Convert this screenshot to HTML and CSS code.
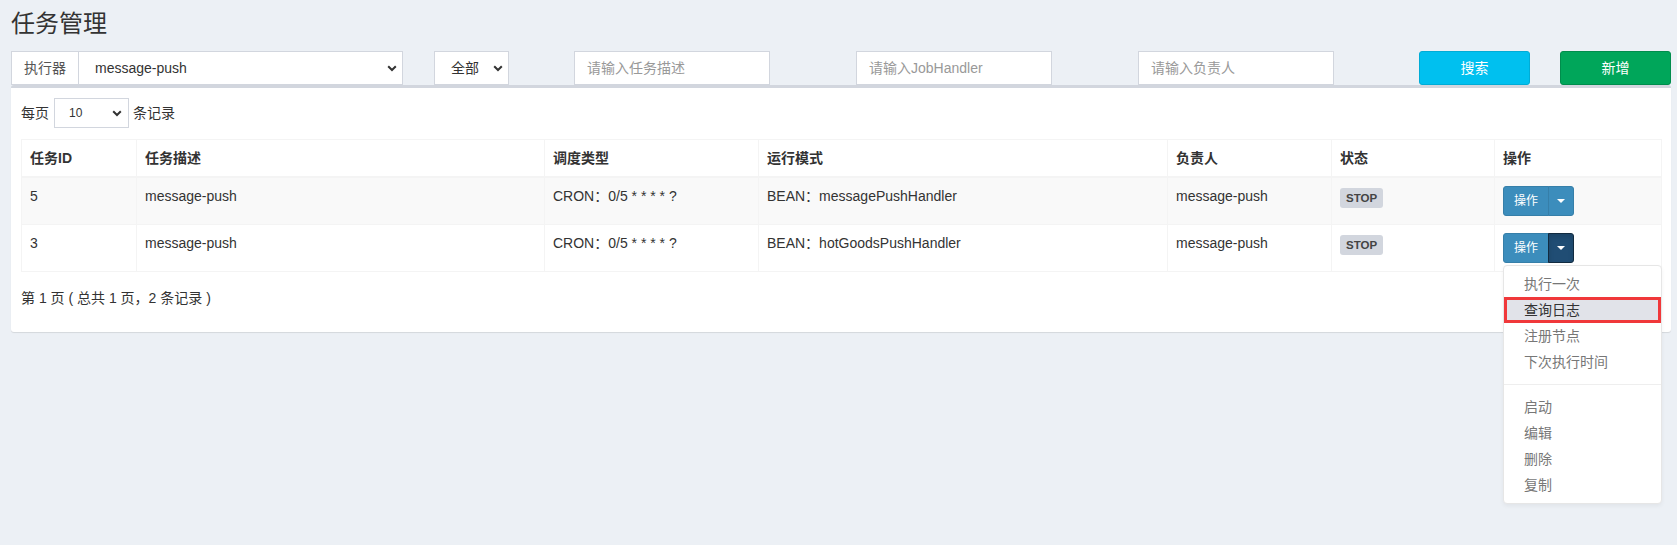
FILE: index.html
```html
<!DOCTYPE html>
<html lang="zh-CN">
<head>
<meta charset="utf-8">
<title>任务管理</title>
<link rel="stylesheet" href="styles.css">
</head>
<body>
<div class="page">
  <h1 class="title">任务管理</h1>

  <div class="filters">
    <div class="group executor">
      <span class="addon">执行器</span>
      <div class="select grow"><span>message-push</span><svg class="chev" width="10" height="7" viewBox="0 0 10 7"><path d="M1.2 1.2 L5 5 L8.8 1.2" fill="none" stroke="#333" stroke-width="2"/></svg></div>
    </div>
    <div class="select status"><span>全部</span><svg class="chev" width="10" height="7" viewBox="0 0 10 7"><path d="M1.2 1.2 L5 5 L8.8 1.2" fill="none" stroke="#333" stroke-width="2"/></svg></div>
    <div class="input f-desc"><span class="ph">请输入任务描述</span></div>
    <div class="input f-handler"><span class="ph">请输入JobHandler</span></div>
    <div class="input f-author"><span class="ph">请输入负责人</span></div>
    <div class="btn btn-info f-search">搜索</div>
    <div class="btn btn-success f-add">新增</div>
  </div>

  <div class="box">
    <div class="box-body">
      <div class="length">
        <span>每页</span>
        <div class="select len"><span>10</span><svg class="chev" width="10" height="7" viewBox="0 0 10 7"><path d="M1.2 1.2 L5 5 L8.8 1.2" fill="none" stroke="#333" stroke-width="2"/></svg></div>
        <span>条记录</span>
      </div>

      <table class="grid">
        <colgroup>
          <col class="c1"><col class="c2"><col class="c3"><col class="c4"><col class="c5"><col class="c6"><col class="c7">
        </colgroup>
        <thead>
          <tr><th>任务ID</th><th>任务描述</th><th>调度类型</th><th>运行模式</th><th>负责人</th><th>状态</th><th>操作</th></tr>
        </thead>
        <tbody>
          <tr class="odd">
            <td>5</td><td>message-push</td><td>CRON：0/5 * * * * ?</td><td>BEAN：messagePushHandler</td><td>message-push</td>
            <td><span class="label">STOP</span></td>
            <td>
              <div class="btn-group">
                <span class="op">操作</span><span class="op-caret"><i class="caret"></i></span>
              </div>
            </td>
          </tr>
          <tr>
            <td>3</td><td>message-push</td><td>CRON：0/5 * * * * ?</td><td>BEAN：hotGoodsPushHandler</td><td>message-push</td>
            <td><span class="label">STOP</span></td>
            <td>
              <div class="btn-group open">
                <span class="op">操作</span><span class="op-caret active"><i class="caret"></i></span>
                <ul class="menu">
                  <li>执行一次</li>
                  <li class="hover">查询日志</li>
                  <li>注册节点</li>
                  <li>下次执行时间</li>
                  <li class="divider"></li>
                  <li>启动</li>
                  <li>编辑</li>
                  <li>删除</li>
                  <li>复制</li>
                </ul>
              </div>
            </td>
          </tr>
        </tbody>
      </table>

      <div class="info">第 1 页 ( 总共 1 页，2 条记录 )</div>
    </div>
  </div>
</div>
</body>
</html>
```

FILE: styles.css
```css
* { box-sizing: border-box; }

html, body {
  margin: 0;
  padding: 0;
}

html { height: 100%; }

body {
  min-height: 545px;
  height: 100%;
  background: #ecf0f5;
  font-family: "Liberation Sans", "Noto Sans CJK SC", sans-serif;
  font-size: 14px;
  color: #333;
  line-height: 20px;
}

.page {
  min-height: 545px;
  padding: 0 6px 0 11px;
}

.title {
  margin: 0;
  padding-top: 11px;
  font-size: 24px;
  line-height: 26px;
  font-weight: normal;
  color: #333;
}

/* filter row */
.filters {
  display: flex;
  margin-top: 14px;
  height: 34px;
}

.group {
  display: flex;
  width: 392px;
  height: 34px;
}

.addon {
  display: flex;
  align-items: center;
  padding: 0 12px;
  height: 34px;
  background: #fff;
  border: 1px solid #d2d6de;
  border-right: 0;
  color: #555;
  white-space: nowrap;
}

.select {
  display: flex;
  align-items: center;
  justify-content: space-between;
  height: 34px;
  background: #fff;
  border: 1px solid #d2d6de;
  color: #333;
  padding: 0 5px 0 16px;
}

.select.grow { flex: 1; }

.chev { display: block; flex: none; }

.status {
  width: 75px;
  margin-left: 31px;
}

.input {
  display: flex;
  align-items: center;
  width: 196px;
  height: 34px;
  background: #fff;
  border: 1px solid #d2d6de;
  padding: 0 12px;
}

.ph { color: #999; white-space: nowrap; }

.f-desc { margin-left: 65px; }
.f-handler { margin-left: 86px; }
.f-author { margin-left: 86px; }

.btn {
  display: flex;
  align-items: center;
  justify-content: center;
  width: 111px;
  height: 34px;
  border-radius: 3px;
  color: #fff;
  border: 1px solid transparent;
}

.btn-info { background: #00c0ef; border-color: #00acd6; }
.btn-success { background: #00a65a; border-color: #008d4c; }

.f-search { margin-left: 85px; }
.f-add { margin-left: 30px; }

/* box */
.box {
  background: #fff;
  border-top: 3px solid #d2d6de;
  border-radius: 3px;
  box-shadow: 0 1px 1px rgba(0, 0, 0, 0.1);
}

.box-body {
  padding: 10px 10px 24px;
}

.length {
  display: flex;
  align-items: center;
  height: 30px;
}

.select.len {
  width: 75px;
  height: 30px;
  margin: 0 4px 0 5px;
  padding: 0 6px 0 14px;
  font-size: 12px;
}

/* table */
.grid {
  width: 1640px;
  margin-top: 11px;
  border-collapse: collapse;
  table-layout: fixed;
}

.c1 { width: 115px; }
.c2 { width: 408px; }
.c3 { width: 214px; }
.c4 { width: 409px; }
.c5 { width: 164px; }
.c6 { width: 163px; }
.c7 { width: 167px; }

.grid th,
.grid td {
  border: 1px solid #f4f4f4;
  padding: 8px;
  text-align: left;
  vertical-align: top;
  line-height: 20px;
}

.grid th {
  font-weight: bold;
  border-bottom-width: 2px;
  vertical-align: bottom;
}

.grid tr.odd td { background: #f9f9f9; }

.grid td { height: 47px; }

.label {
  display: inline-block;
  margin-top: 2px;
  height: 20px;
  line-height: 20px;
  padding: 0 6px;
  background: #d2d6de;
  color: #444;
  font-size: 11.5px;
  font-weight: bold;
  border-radius: 3px;
  vertical-align: top;
}

.btn-group {
  position: relative;
  display: inline-flex;
  vertical-align: top;
}

.op,
.op-caret {
  display: flex;
  align-items: center;
  justify-content: center;
  height: 30px;
  background: #3c8dbc;
  border: 1px solid #367fa9;
  color: #fff;
  font-size: 12px;
}

.op {
  padding: 0 10px;
  border-radius: 3px 0 0 3px;
}

.op-caret {
  width: 26px;
  margin-left: -1px;
  border-radius: 0 3px 3px 0;
}

.op-caret.active {
  background: #204d74;
  border-color: #122b40;
  box-shadow: inset 0 3px 5px rgba(0, 0, 0, 0.125);
}

.caret {
  display: block;
  width: 0;
  height: 0;
  border-top: 4px solid #fff;
  border-left: 4px solid transparent;
  border-right: 4px solid transparent;
}

/* dropdown menu (overlay) */
.menu {
  position: absolute;
  top: 100%;
  left: 0;
  z-index: 10;
  width: 159px;
  margin: 2px 0 0;
  padding: 5px 0;
  list-style: none;
  background: #fff;
  border: 1px solid #e6e6e6;
  border-radius: 4px;
  box-shadow: 0 2px 4px rgba(0, 0, 0, 0.05);
}

.menu li {
  padding: 3px 20px;
  line-height: 20px;
  color: #777;
  white-space: nowrap;
}

.menu li.hover {
  background: #e1e3e9;
  color: #333;
  outline: 3px solid #f0383a;
  outline-offset: -3px;
}

.menu li.divider {
  height: 1px;
  padding: 0;
  margin: 9px 0;
  background: #eee;
}

.info {
  margin-top: 16px;
  line-height: 20px;
}
```
